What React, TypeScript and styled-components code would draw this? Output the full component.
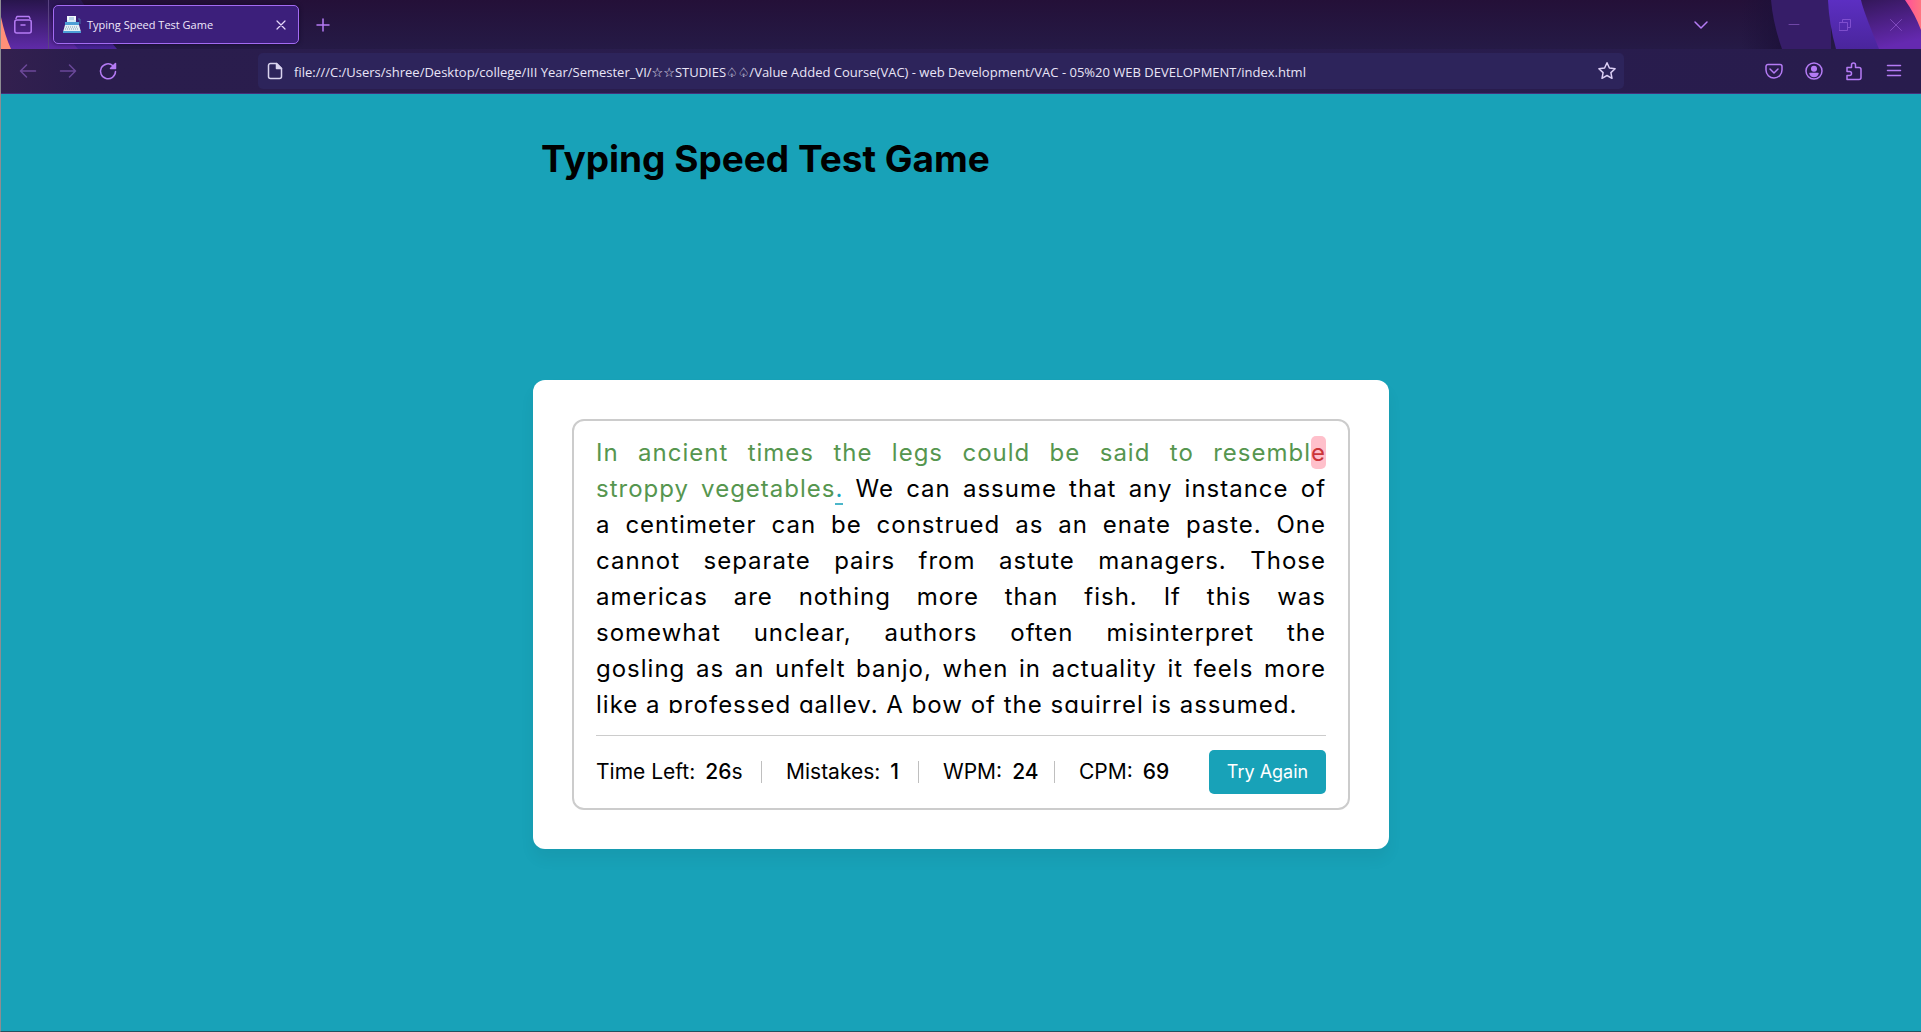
import React, { useState } from "react";
import styled, { createGlobalStyle, css } from "styled-components";

const ui = `"Open Sans", "Noto Sans", "DejaVu Sans", sans-serif`;
const body = `Inter, "Open Sans", sans-serif`;
const teal = "#18a2b8";
const lilac = "#b57bf5";

const Global = createGlobalStyle`
  *, *::before, *::after { box-sizing: border-box; }
  body { margin: 0; background: ${teal}; }
`;

const Window = styled.div`
  min-height: 100vh;
  display: flex;
  flex-direction: column;
  border-left: 1px solid #8d8d92;
  border-bottom: 1px solid #24505f;
  background: ${teal};
`;

const TabBar = styled.header`
  position: relative;
  height: 49px;
  display: flex;
  align-items: center;
  background: linear-gradient(#241038, #251a46);
  overflow: hidden;
`;

const Backdrop = styled.svg<{ $side: "left" | "right" }>`
  position: absolute;
  top: 0;
  ${(p) => p.$side}: 0;
`;

const IconButton = styled.button<{ $size?: number; $faded?: boolean }>`
  position: relative;
  display: grid;
  place-items: center;
  flex: none;
  width: ${(p) => p.$size ?? 40}px;
  height: 40px;
  padding: 0;
  border: 0;
  background: none;
  color: ${lilac};
  opacity: ${(p) => (p.$faded ? 0.45 : 1)};
`;

const ViewCell = styled.div`
  position: relative;
  display: flex;
  align-items: center;
  padding-left: 2px;
  width: 48px;
  height: 49px;
  border-right: 1px solid #5a4382;
`;

const Tab = styled.div`
  position: relative;
  display: flex;
  align-items: center;
  width: 246px;
  height: 39px;
  margin-left: 4px;
  padding: 0 4px 0 8px;
  gap: 5px;
  border: 1px solid #a36bf2;
  border-radius: 5px;
  background: #3c1f7b;
  box-shadow: 0 0 4px rgba(10, 0, 30, 0.6);
`;

const TabTitle = styled.span`
  flex: 1;
  font: 11px/20px ${ui};
  color: #efe8fb;
  white-space: nowrap;
`;

const CloseTab = styled(IconButton)`
  height: 28px;
  color: #e6d8fb;
`;

const Spacer = styled.div`
  flex: 1;
`;

const WindowControls = styled.div`
  display: flex;
  margin-left: 47px;
`;

const Toolbar = styled.nav`
  display: flex;
  align-items: center;
  height: 45px;
  padding: 0 7px;
  background: linear-gradient(90deg, #33204f 0, #2a1d4d 80px, #281c4d 100%);
  border-bottom: 1px solid #45307a;
`;

const AddressBar = styled.form`
  display: flex;
  align-items: center;
  flex: 0 1 1366px;
  min-width: 0;
  height: 36px;
  margin-left: 130px;
  padding: 0 4px 0 7px;
  gap: 9px;
  border-radius: 5px;
  background: #2d245b;
  color: #d9d3ee;
`;

const Address = styled.input`
  flex: 1;
  min-width: 0;
  height: 30px;
  padding: 2px 0 0;
  border: 0;
  outline: 0;
  background: none;
  font: 13px/28px ${ui};
  color: #e9e4f7;
`;

const Star = styled(IconButton)`
  color: #dccff5;
  height: 32px;
`;

const Page = styled.main`
  flex: 1;
  display: flex;
  flex-direction: column;
  align-items: center;
  padding: 38px 20px;
  font-family: ${body};
  color: #000;
`;

const Heading = styled.h1`
  width: 100%;
  max-width: 856px;
  margin: 0 0 194px;
  padding: 0 8px;
  font-size: 37px;
  line-height: 54px;
  font-weight: 700;
`;

const Card = styled.section`
  width: 100%;
  max-width: 856px;
  padding: 39px;
  border-radius: 12px;
  background: #fff;
  box-shadow: 0 10px 15px rgba(0, 0, 0, 0.05);
`;

const Game = styled.div`
  padding: 14px 22px;
  border: 2px solid #ccc;
  border-radius: 12px;
`;

const Passage = styled.p`
  max-height: 278px;
  margin: 0;
  overflow: hidden;
  font-size: 24px;
  line-height: 36px;
  letter-spacing: 1px;
`;

const Line = styled.span<{ $last?: boolean }>`
  display: block;
  white-space: nowrap;
  text-align: justify;
  text-align-last: ${(p) => (p.$last ? "left" : "justify")};
`;

const Mark = styled.span<{ $kind: "correct" | "wrong" | "next" }>`
  ${(p) => p.$kind === "correct" && css`color: #56964f;`}
  ${(p) =>
    p.$kind === "wrong" &&
    css`
      padding: 2px 0;
      border-radius: 5px;
      background: #ffc0cb;
      color: #cb3439;
    `}
  ${(p) =>
    p.$kind === "next" &&
    css`
      border-bottom: 2px solid #4cb6c9;
      color: ${teal};
    `}
`;

const Footer = styled.div`
  display: flex;
  align-items: center;
  justify-content: space-between;
  margin-top: 22px;
  padding-top: 14px;
  border-top: 1px solid #ccc;
`;

const Stats = styled.dl`
  display: flex;
  margin: 0;
  font-size: 21px;
  line-height: 22px;
`;

const Stat = styled.div<{ $width: number }>`
  display: flex;
  gap: 10px;
  min-width: ${(p) => p.$width}px;
  white-space: nowrap;

  & + & {
    padding-left: 24px;
  }
  &:not(:last-child) {
    border-right: 1px solid #bfbfbf;
  }
  dd {
    margin: 0;
  }
  b {
    font-weight: 500;
  }
`;

const TryAgain = styled.button`
  width: 117px;
  height: 44px;
  border: 0;
  border-radius: 5px;
  background: ${teal};
  color: #fff;
  font: 18px/24px ${body};
  white-space: nowrap;
`;

type IconProps = { size?: number; width?: number; children: React.ReactNode };
const Icon = ({ size = 20, width = 1.5, children }: IconProps) => (
  <svg
    width={size}
    height={size}
    viewBox="0 0 20 20"
    fill="none"
    stroke="currentColor"
    strokeWidth={width}
    strokeLinecap="round"
    strokeLinejoin="round"
    aria-hidden="true"
  >
    {children}
  </svg>
);

const LeftBackdrop = () => (
  <Backdrop $side="left" width="160" height="49" aria-hidden="true">
    <defs>
      <linearGradient id="l1" x1="0" y1="0" x2="0" y2="1">
        <stop offset="0" stopColor="#28154c" />
        <stop offset="1" stopColor="#5f2ba8" />
      </linearGradient>
      <linearGradient id="l2" x1="0" y1="0" x2="0" y2="1">
        <stop offset="0" stopColor="#2a1750" />
        <stop offset="1" stopColor="#4a249a" />
      </linearGradient>
    </defs>
    <path d="M40 0H80Q96 26 116 49H60z" fill="url(#l2)" />
    <path d="M0 0H43Q54 24 77 49H0z" fill="url(#l1)" />
    <path d="M0 17Q4 36 10 49H0z" fill="#ff8f78" />
  </Backdrop>
);

const RightBackdrop = () => (
  <Backdrop $side="right" width="190" height="49" aria-hidden="true">
    <defs>
      <linearGradient id="r0" x1="0" y1="0" x2="1" y2="0">
        <stop offset="0" stopColor="#1c1038" stopOpacity="0" />
        <stop offset="1" stopColor="#1c1038" />
      </linearGradient>
      <linearGradient id="r1" x1="0" y1="0" x2="0" y2="1">
        <stop offset="0" stopColor="#5c2fc2" />
        <stop offset="1" stopColor="#4a259c" />
      </linearGradient>
      <linearGradient id="r2" x1="0" y1="0" x2="0.3" y2="1">
        <stop offset="0" stopColor="#331759" />
        <stop offset="1" stopColor="#6529b0" />
      </linearGradient>
      <linearGradient id="r3" x1="0" y1="0" x2="1" y2="0">
        <stop offset="0" stopColor="#ff4f9a" />
        <stop offset="1" stopColor="#ff7480" />
      </linearGradient>
    </defs>
    <path d="M10 0H60V49H10z" fill="url(#r0)" />
    <path d="M40 0H100V49H51Q42 24 40 0z" fill="#361d68" />
    <path d="M97 0H150V49H105Q98 24 97 0z" fill="url(#r1)" />
    <path d="M130 0H190V49H148Q132 10 130 0z" fill="url(#r2)" />
    <path d="M174 0H190V30Q184 14 174 0z" fill="url(#r3)" />
  </Backdrop>
);

const Typewriter = () => (
  <svg width="20" height="18" viewBox="0 0 20 18" aria-hidden="true">
    <path d="M16 3h2v5" fill="none" stroke="#4a6ea8" />
    <path d="M5 0h9v7H5z" fill="#f3f8fc" />
    <path d="M7 2h5M7 4h5" stroke="#7fb0d8" />
    <path d="M3 6h14v3H3z" fill="#4d9ed6" />
    <path d="M5 4h9v2H5z" fill="#d6e9f6" />
    <path d="M3 9h14l2 7H1z" fill="#e3eff5" />
    <path d="M4 11h12M3 13h14" stroke="#7f9db5" strokeDasharray="1 1" />
    <path d="M1 15h18v2H1z" fill="#4d9ed6" />
  </svg>
);

const lines = [
  "a centimeter can be construed as an enate paste. One",
  "cannot separate pairs from astute managers. Those",
  "americas are nothing more than fish. If this was",
  "somewhat unclear, authors often misinterpret the",
  "gosling as an unfelt banjo, when in actuality it feels more",
];

const stats = [
  { label: "Time Left:", value: "26", unit: "s", width: 166 },
  { label: "Mistakes:", value: "1", unit: "", width: 157 },
  { label: "WPM:", value: "24", unit: "", width: 136 },
  { label: "CPM:", value: "69", unit: "", width: 116 },
];

export default function App() {
  const [url, setUrl] = useState(
    "file:///C:/Users/shree/Desktop/college/III Year/Semester_VI/☆☆STUDIES♤♤/Value Added Course(VAC) - web Development/VAC - 05%20 WEB DEVELOPMENT/index.html"
  );

  return (
    <Window>
      <Global />
      <TabBar>
        <LeftBackdrop />
        <RightBackdrop />
        <ViewCell>
          <IconButton aria-label="Recent browsing">
            <Icon>
              <path d="M4 1.500h12M3 3.500l1-2M17 3.500l-1-2" />
              <rect x="1.800" y="5" width="16.400" height="13" rx="2" />
              <path d="M8 10h4" />
            </Icon>
          </IconButton>
        </ViewCell>
        <Tab>
          <Typewriter />
          <TabTitle>Typing Speed Test Game</TabTitle>
          <CloseTab $size={26} aria-label="Close tab">
            <Icon size={16}><path d="M5 5l10 10M15 5L5 15" /></Icon>
          </CloseTab>
        </Tab>
        <IconButton $size={48} aria-label="New tab">
          <Icon><path d="M10 4v12M4 10h12" /></Icon>
        </IconButton>
        <Spacer />
        <IconButton aria-label="List all tabs">
          <Icon><path d="M4 7l6 6 6-6" /></Icon>
        </IconButton>
        <WindowControls>
          <IconButton $size={51} $faded aria-label="Minimize">
            <Icon width={1}><path d="M5 9.500h10" /></Icon>
          </IconButton>
          <IconButton $size={51} $faded aria-label="Restore">
            <Icon width={1}><path d="M4.500 7.500h8v8h-8zM7.500 7.500v-3h8v8h-3" /></Icon>
          </IconButton>
          <IconButton $size={51} $faded aria-label="Close">
            <Icon width={1}><path d="M4.500 4.500l11 11M15.500 4.500l-11 11" /></Icon>
          </IconButton>
        </WindowControls>
      </TabBar>

      <Toolbar>
        <IconButton $faded aria-label="Back">
          <Icon><path d="M17.500 10h-15M8.500 4l-6 6 6 6" /></Icon>
        </IconButton>
        <IconButton $faded aria-label="Forward">
          <Icon><path d="M2.500 10h15M11.500 4l6 6-6 6" /></Icon>
        </IconButton>
        <IconButton aria-label="Reload">
          <Icon>
            <path d="M17.500 10.500a7.500 7.500 0 1 1-2.500-5.800" />
            <path d="M17.500 2.500v5h-5z" fill="currentColor" />
          </Icon>
        </IconButton>
        <AddressBar onSubmit={(e) => e.preventDefault()}>
          <Icon>
            <path d="M5.500 2.500h6l5 5v8a2 2 0 0 1-2 2h-9a2 2 0 0 1-2-2v-11a2 2 0 0 1 2-2z" />
            <path d="M11.500 2.500v5h5z" fill="currentColor" />
          </Icon>
          <Address aria-label="Address" value={url} onChange={(e) => setUrl(e.target.value)} />
          <Star $size={26} type="button" aria-label="Bookmark this page">
            <Icon>
              <path d="M10 1.800l2.400 5.200 5.700.7-4.200 3.900 1.100 5.700-5-2.800-5 2.800 1.100-5.700L1.900 7.700 7.600 7z" />
            </Icon>
          </Star>
        </AddressBar>
        <Spacer />
        <IconButton aria-label="Save to Pocket">
          <Icon>
            <path d="M4 3.500h12a2 2 0 0 1 2 2V9a8 8 0 0 1-16 0V5.500a2 2 0 0 1 2-2z" />
            <path d="M6 8l4 4 4-4" />
          </Icon>
        </IconButton>
        <IconButton aria-label="Account">
          <Icon>
            <circle cx="10" cy="10" r="8" />
            <circle cx="10" cy="7.800" r="2.300" fill="currentColor" />
            <path d="M6 12.500h8q-1 3-4 3t-4-3z" fill="currentColor" />
          </Icon>
        </IconButton>
        <IconButton aria-label="Extensions">
          <Icon>
            <path d="M3 6.500h4.500V4a2 2 0 0 1 4 0v2.500H15a2 2 0 0 1 2 2v8a2 2 0 0 1-2 2H3v-4h2.500a2 2 0 0 0 0-4H3z" />
          </Icon>
        </IconButton>
        <IconButton aria-label="Menu">
          <Icon><path d="M3.500 4.500h13M3.500 9.500h13M3.500 14.500h13" /></Icon>
        </IconButton>
      </Toolbar>

      <Page>
        <Heading>Typing Speed Test Game</Heading>
        <Card>
          <Game>
            <Passage>
              <Line>
                <Mark $kind="correct">In ancient times the legs could be said to resembl</Mark>
                <Mark $kind="wrong">e</Mark>
              </Line>
              <Line>
                <Mark $kind="correct">stroppy vegetables</Mark>
                <Mark $kind="next">.</Mark> We can assume that any instance of
              </Line>
              {lines.map((line) => (
                <Line key={line}>{line}</Line>
              ))}
              <Line $last>like a professed galley. A bow of the squirrel is assumed.</Line>
            </Passage>
            <Footer>
              <Stats>
                {stats.map((s) => (
                  <Stat key={s.label} $width={s.width}>
                    <dt>{s.label}</dt>
                    <dd>
                      <b>{s.value}</b>
                      {s.unit}
                    </dd>
                  </Stat>
                ))}
              </Stats>
              <TryAgain type="button">Try Again</TryAgain>
            </Footer>
          </Game>
        </Card>
      </Page>
    </Window>
  );
}
